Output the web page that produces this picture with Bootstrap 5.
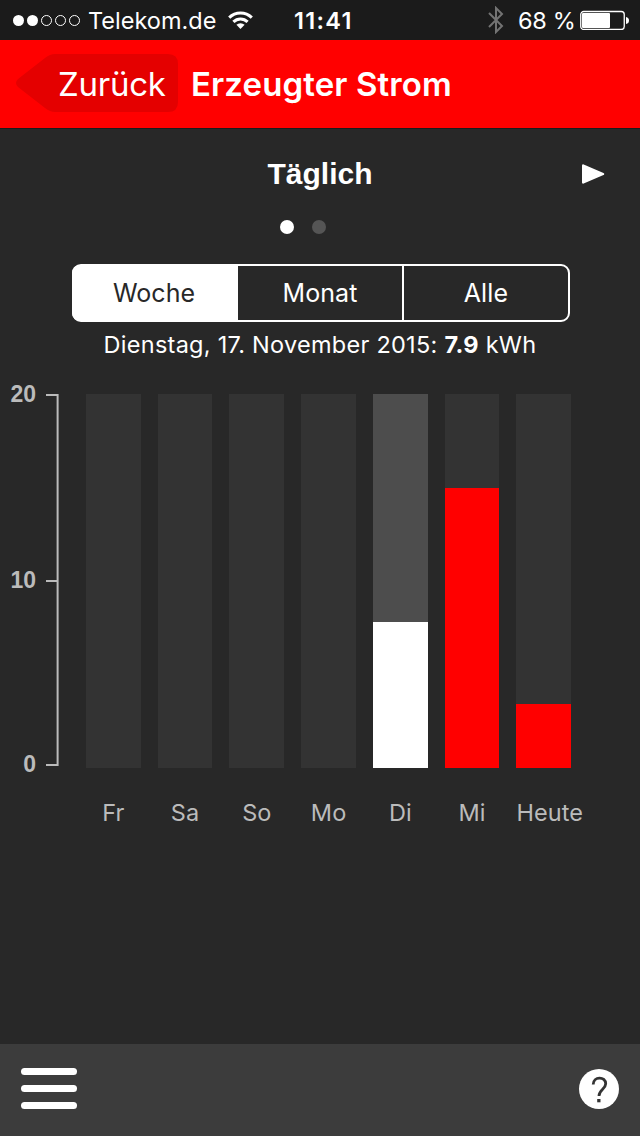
<!DOCTYPE html>
<html lang="de" data-bs-theme="dark">
<head>
<meta charset="utf-8">
<meta name="viewport" content="width=device-width, initial-scale=1">
<title>Erzeugter Strom</title>
<link rel="stylesheet" href="https://cdn.jsdelivr.net/npm/bootstrap@5.3.0/dist/css/bootstrap.min.css">
<style>
  body { background: #282828; color: #fff; font-family: Inter, sans-serif; height: 1136px; }
  .status-bar { height: 40px; background: #1b1b1b; font-size: 23.5px; line-height: 38px; padding-left: 13px; padding-right: 11px; }
  .status-bar span { padding-top: 2px; }
  .signal { margin-right: 7px; }
  .carrier { width: 129px; letter-spacing: 0; }
  .wifi { margin-left: 11px; }
  .clock { margin-left: 41px; font-weight: 600; letter-spacing: 1.3px; }
  .charge { width: 57px; margin-left: 13px; margin-right: 5px; letter-spacing: -.3px; }
  .app-header { height: 89px; background: #f00; border-bottom: 1px solid #1c1c1c; padding-left: 16px; }
  .back-btn { width: 162px; height: 58px; margin-top: -2px; }
  .back-btn span { font-size: 33px; left: 42px; top: 6px; letter-spacing: -.25px; }
  .app-title { font-size: 33px; font-weight: 600; margin-left: 13px; line-height: 50px; letter-spacing: .12px; }
  .view-title { font: bold 30px/42px "Liberation Sans", sans-serif; }
  .next-view { right: 35px; top: 35px; }
  .pager-row { height: 69px; padding: 25px 0 0 280px; gap: 18px; }
  .page-dot { width: 14px; height: 14px; background: #fff; }
  .page-dot.inactive { background: #555; }
  .range-group { width: 498px; height: 58px; margin-left: 72px; border: 2px solid #fff; border-radius: 9px; display: grid; grid-template-columns: 164px 164px 166px; }
  .range-group .btn { --bs-btn-font-size: 25px; --bs-btn-color: #fff; --bs-btn-border-width: 0; --bs-btn-border-radius: 0; --bs-btn-hover-color: #fff; letter-spacing: .05px; line-height: 54px; }
  .range-group .btn:last-child { border-left: 2px solid #fff; letter-spacing: .2px; }
  .range-group .btn.active { background: #fff; color: #282828; border-radius: 7px 0 0 7px; box-shadow: -1px 0 0 1px #fff; clip-path: inset(-2px 0 -2px -2px); padding-right: 4px !important; }
  .reading { font-size: 23.5px; line-height: 32px; margin-top: 7px; letter-spacing: .27px; }
  .chart-area { margin-top: 33px; height: 374px; }
  .axis-labels { width: 36px; font: bold 23px/26px "Liberation Sans", sans-serif; color: #bbb; margin-top: -13px; height: 396px; }
  .axis-labels span:nth-child(2) { padding-top: 2px; }
  .axis-rule { width: 14px; height: 374px; margin-left: 9px; margin-right: 27px; }
  .bars, .day-labels { display: grid; grid-template-columns: repeat(7, minmax(0, 1fr)); column-gap: 17px; width: 485.2px; }
  .track { background: #333; height: 374px; }
  .track.selected { background: #4d4d4d; }
  .fill { background: #f00; width: 100%; }
  .selected .fill { background: #fff; }
  .day-labels { margin-left: 86px; margin-top: 29px; font-size: 23.5px; line-height: 32px; color: #bbb; letter-spacing: .1px; }
  .tab-footer { height: 92px; background: #3c3c3c; padding: 0 21px; }
  .menu-icon i { width: 56px; height: 7px; background: #fff; }
  .menu-icon { gap: 10px; margin-top: -3px; }
  .help-icon { width: 40px; height: 40px; margin-top: -2px; }
</style>
</head>
<body class="d-flex flex-column overflow-hidden">
<div class="status-bar d-flex align-items-center text-nowrap">
  <svg class="signal flex-shrink-0" width="68" height="14" viewBox="0 0 68 14" fill="none" stroke="#fff"><circle cx="5.5" cy="7.500" r="5.5" fill="#fff" stroke="none"/><circle cx="19.5" cy="7.500" r="5.5" fill="#fff" stroke="none"/><circle cx="33.5" cy="7.500" r="5"/><circle cx="47.5" cy="7.500" r="5"/><circle cx="61.5" cy="7.500" r="5"/></svg>
  <span class="carrier">Telekom.de</span>
  <svg class="wifi flex-shrink-0" width="25" height="18" viewBox="0 0 25 18" fill="none" stroke="#fff" stroke-width="3"><path d="M1.2 6.6a16 16 0 0 1 22.6 0M5.4 10.9a10 10 0 0 1 14.2 0"/><path d="M12.5 18l-4.1-4.2a5.9 5.9 0 0 1 8.2 0z" fill="#fff" stroke="none"/></svg>
  <span class="clock">11:41</span>
  <svg class="ms-auto flex-shrink-0" width="17" height="28" viewBox="0 0 17 28" fill="none" stroke="#737373" stroke-width="2"><path d="M1 7l13 13-6 6V2l6 6L1 21"/></svg>
  <span class="charge">68 %</span>
  <svg class="flex-shrink-0" width="49" height="20" viewBox="0 0 49 20"><rect x=".75" y="1.500" width="43.5" height="18" rx="3" fill="none" stroke="#fff" stroke-width="1.3"/><rect x="2" y="3" width="28" height="15" rx="1" fill="#fff"/><path d="M46 7q3 .5 3 3.5t-3 3.5z" fill="#fff"/></svg>
</div>
<header class="app-header d-flex align-items-center text-nowrap">
  <a class="back-btn position-relative d-block text-white text-decoration-none" href="#">
    <svg width="162" height="58" viewBox="0 0 162 58" class="d-block"><path d="M2 25L29 4Q34 0 39 0H152Q162 0 162 10V48Q162 58 152 58H39Q34 58 29 54L2 33Q-2 29 2 25Z" fill="#e40000"/></svg>
    <span class="position-absolute">Zurück</span>
  </a>
  <h1 class="app-title mb-0">Erzeugter Strom</h1>
</header>
<main class="flex-grow-1">
  <div class="position-relative text-center pt-4">
    <h2 class="view-title mb-0">Täglich</h2>
    <svg class="next-view position-absolute" width="24" height="20" viewBox="0 0 24 20"><path d="M2.2 1.5L22 10 2.2 18.5z" fill="#fff" stroke="#fff" stroke-width="2.4" stroke-linejoin="round"/></svg>
  </div>
  <div class="pager-row d-flex"><i class="page-dot rounded-circle"></i><i class="page-dot inactive rounded-circle"></i></div>
  <div class="range-group">
    <button class="btn active p-0">Woche</button>
    <button class="btn p-0">Monat</button>
    <button class="btn p-0">Alle</button>
  </div>
  <p class="reading text-center text-nowrap mb-0">Dienstag, 17. November 2015: <b>7.9</b> kWh</p>
  <section class="chart-area d-flex">
    <div class="axis-labels d-flex flex-column justify-content-between text-end"><span>20</span><span>10</span><span>0</span></div>
    <svg class="axis-rule" viewBox="0 0 14 374" fill="none" stroke="#bbb" stroke-width="2"><path d="M1 1H12.6V371H1M1 187H12.6"/></svg>
    <div class="bars">
      <div class="track"></div><div class="track"></div><div class="track"></div><div class="track"></div>
      <div class="track selected d-flex align-items-end"><div class="fill" style="height:146px"></div></div>
      <div class="track d-flex align-items-end"><div class="fill" style="height:280px"></div></div>
      <div class="track d-flex align-items-end"><div class="fill" style="height:64px"></div></div>
    </div>
  </section>
  <div class="day-labels text-center text-nowrap"><span>Fr</span><span>Sa</span><span>So</span><span>Mo</span><span>Di</span><span>Mi</span><span>Heute</span></div>
</main>
<footer class="tab-footer d-flex align-items-center justify-content-between">
  <div class="menu-icon d-flex flex-column"><i class="rounded-pill"></i><i class="rounded-pill"></i><i class="rounded-pill"></i></div>
  <svg class="help-icon" viewBox="0 0 40 40"><circle cx="20" cy="20" r="20" fill="#fff"/><path d="M14.200 15.5C14.200 7 26.7 7 26.7 14.800C26.7 20 20 20.500 20 27" fill="none" stroke="#333" stroke-width="2.8"/><rect x="18.200" y="30" width="3.300" height="3.300" fill="#333"/></svg>
</footer>
<script src="https://cdn.jsdelivr.net/npm/bootstrap@5.3.0/dist/js/bootstrap.bundle.min.js"></script>
</body>
</html>
